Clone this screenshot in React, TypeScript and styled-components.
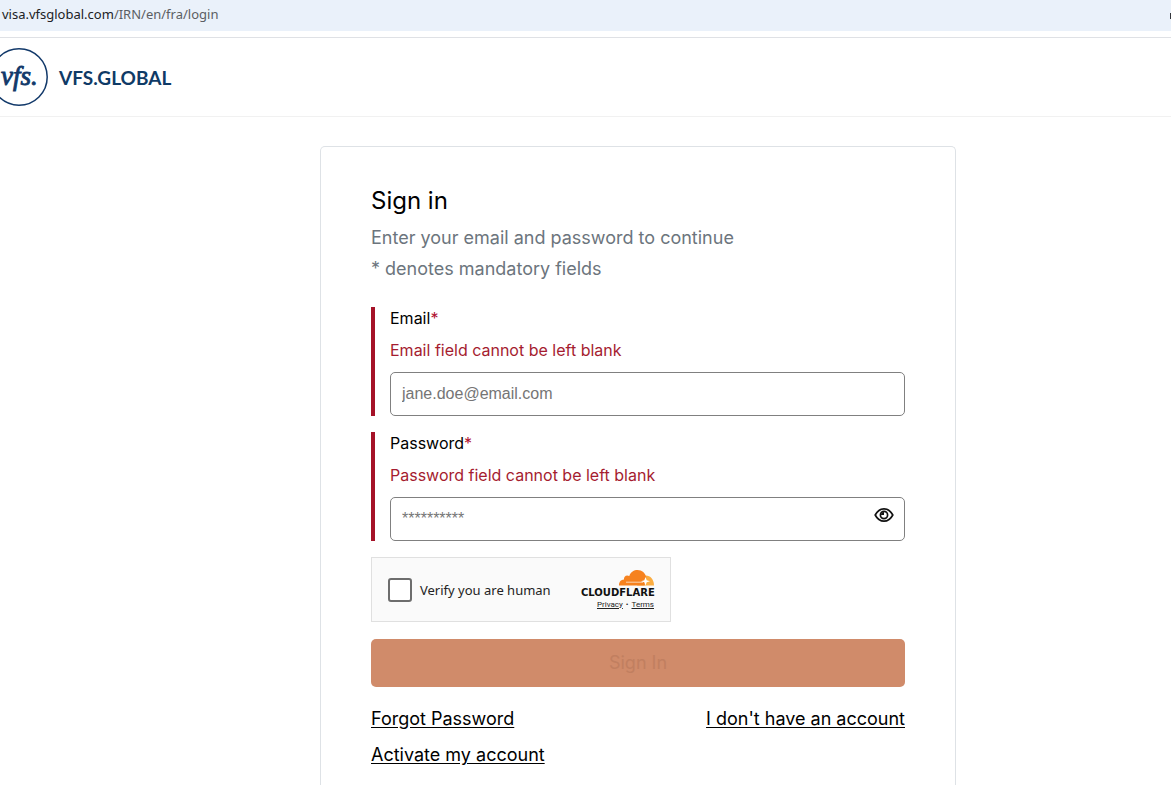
import React from "react";
import styled, { createGlobalStyle } from "styled-components";

const GlobalStyle = createGlobalStyle`
  *, *::before, *::after { box-sizing: border-box; }
  body {
    margin: 0;
    background: #fff;
    color: #000;
    font-family: Inter, "Liberation Sans", sans-serif;
    font-size: 16px;
  }
`;

const Page = styled.div`
  min-height: 100vh;
  display: flex;
  flex-direction: column;
`;

const AddressBar = styled.div`
  display: flex;
  align-items: center;
  justify-content: space-between;
  height: 31px;
  padding-left: 2px;
  background: #eaf1fa;
  color: #5b5e63;
  font: 13px/28px "Noto Sans", "Open Sans", sans-serif;
`;

const Address = styled.div`
  height: 31px;
`;

const Host = styled.span`
  color: #202225;
`;

const BarControl = styled.span`
  width: 1px;
  height: 6px;
  background: #33363b;
`;

const Header = styled.header`
  display: flex;
  align-items: center;
  gap: 11px;
  height: 80px;
  margin-top: 6px;
  border-top: 1px solid #dfe1e5;
  border-bottom: 1px solid #f1f1f1;
`;

const Brand = styled.span`
  padding-top: 2px;
  color: #0f3a66;
  font: 700 19px/24px Lato, "Liberation Sans", sans-serif;
`;

const Main = styled.main`
  flex: 1;
  display: flex;
  justify-content: center;
  padding: 29px 0 0 105px;
`;

const Card = styled.form`
  width: 100%;
  max-width: 636px;
  padding: 38px 50px 16px;
  border: 1px solid #dee2e6;
  border-bottom: 0;
  border-radius: 5px 5px 0 0;
`;

const Title = styled.h1`
  margin: 0 0 5px;
  font-size: 24px;
  line-height: 32px;
  font-weight: 400;
`;

const Lead = styled.p`
  margin: 0;
  color: #6c757d;
  font-size: 18px;
  line-height: 31px;
`;

const Fields = styled.div`
  display: flex;
  flex-direction: column;
  gap: 16px;
  margin: 23px 0 16px;
`;

const Field = styled.div`
  padding-left: 15px;
  border-left: 4px solid #a51228;
`;

const Label = styled.label`
  display: block;
  font-size: 16px;
  line-height: 22px;
`;

const Required = styled.span`
  color: #b01030;
`;

const ErrorText = styled.p`
  margin: 9px 0 10px;
  color: #a51c30;
  font-size: 16px;
  line-height: 24px;
`;

const InputBox = styled.div`
  display: flex;
  align-items: center;
  height: 44px;
  padding: 0 10px 0 11px;
  border: 1px solid #808080;
  border-radius: 5px;
`;

const Input = styled.input`
  flex: 1;
  min-width: 0;
  padding: 0;
  border: 0;
  outline: 0;
  background: none;
  font: 16px/24px "Liberation Sans", sans-serif;
  &::placeholder { color: #757575; opacity: 1; }
`;

const EyeButton = styled.button`
  display: flex;
  padding: 0 0 8px;
  border: 0;
  background: none;
`;

const Captcha = styled.div`
  display: flex;
  align-items: center;
  width: 300px;
  height: 65px;
  padding: 0 15px 0 16px;
  border: 1px solid #e0e0e0;
  background: #fafafa;
`;

const CaptchaLabel = styled.label`
  flex: 1;
  display: flex;
  align-items: center;
  gap: 8px;
  color: #232323;
  font: 13px/20px "Noto Sans", "Open Sans", sans-serif;
  white-space: nowrap;
`;

const Checkbox = styled.input`
  appearance: none;
  width: 24px;
  height: 24px;
  margin: 0;
  border: 2px solid #6d6d6d;
  border-radius: 3px;
  background: #fff;
`;

const Provider = styled.div`
  display: flex;
  flex-direction: column;
  align-items: flex-end;
`;

const Legal = styled.div`
  display: flex;
  gap: 3px;
  padding-right: 1px;
  color: #232323;
  font: 8px/12px Roboto, sans-serif;
  a { color: inherit; }
`;

const Submit = styled.button`
  display: block;
  width: 100%;
  height: 48px;
  margin: 17px 0 16px;
  padding: 0;
  border: 0;
  border-radius: 5px;
  background: #d08b6a;
  color: #c17f60;
  font: 18px/24px Inter, sans-serif;
`;

const Links = styled.nav`
  display: grid;
  grid-template-columns: auto auto;
  justify-content: space-between;
  row-gap: 4px;
`;

const TextLink = styled.a`
  color: #000;
  font-size: 18px;
  line-height: 32px;
  text-underline-offset: 2px;
`;

const VfsMark = () => (
  <svg width="48" height="58" viewBox="0 0 48 58" role="img" aria-label="VFS emblem">
    <circle cx="19" cy="29" r="28.2" fill="none" stroke="#12396a" strokeWidth="1.5" />
    <text x="1" y="37" fill="#12396a" stroke="#12396a" strokeWidth="0.9" fontFamily="Liberation Serif, serif" fontStyle="italic" fontSize="27">
      vfs.
    </text>
  </svg>
);

const EyeIcon = () => (
  <svg width="20" height="16" viewBox="0 0 20 16" fill="none" stroke="#111" aria-hidden="true">
    <path d="M1.2 8C3.2 4.2 6.2 1.8 10 1.8S16.8 4.2 18.8 8C16.8 11.8 13.8 14.2 10 14.2S3.2 11.8 1.2 8Z" strokeWidth="1.7" strokeLinejoin="round" />
    <circle cx="10" cy="8" r="3.6" strokeWidth="1.7" />
    <path d="M10 5V8H7A3 3 0 0 1 10 5Z" fill="#111" stroke="none" />
  </svg>
);

const CloudflareLogo = () => (
  <svg width="76" height="30" viewBox="0 0 76 30" role="img" aria-label="Cloudflare">
    <path d="M66 6.5C71 6 75 10 75 16.5H58Z" fill="#fbad41" />
    <path d="M40 16.5C40 12.5 42 10.8 45 10.5C44.5 7.3 47.5 5.3 50.3 7C51.8 2.8 55 1 58.5 1C63 1 66.5 4 67.3 8.5L65.5 16.5Z" fill="#f6821f" />
    <path d="M47 13.2H64" stroke="#fde0c4" strokeWidth="0.9" />
    <path d="M66.5 8L67.7 11.2L71 12.2L67.7 13.2L66.5 16.5L65.3 13.2L62 12.2L65.3 11.2Z" fill="#fff" />
    <text x="2" y="27" fill="#111" fontFamily="DejaVu Sans, sans-serif" fontWeight="700" fontSize="10">
      CLOUDFLARE
    </text>
  </svg>
);

interface FormFieldProps {
  id: string;
  label: string;
  type: string;
  placeholder: string;
  children?: React.ReactNode;
}

const FormField = ({ id, label, type, placeholder, children }: FormFieldProps) => (
  <Field>
    <Label htmlFor={id}>{label}<Required>*</Required></Label>
    <ErrorText id={`${id}-error`}>{label} field cannot be left blank</ErrorText>
    <InputBox>
      <Input id={id} type={type} placeholder={placeholder} aria-invalid="true" aria-describedby={`${id}-error`} />
      {children}
    </InputBox>
  </Field>
);

export default function App() {
  return (
    <Page>
      <GlobalStyle />
      <AddressBar>
        <Address><Host>visa.vfsglobal.com</Host>/IRN/en/fra/login</Address>
        <BarControl />
      </AddressBar>
      <Header>
        <VfsMark />
        <Brand>VFS.GLOBAL</Brand>
      </Header>
      <Main>
        <Card onSubmit={(e) => e.preventDefault()}>
          <Title>Sign in</Title>
          <Lead>Enter your email and password to continue</Lead>
          <Lead>* denotes mandatory fields</Lead>
          <Fields>
            <FormField id="email" label="Email" type="email" placeholder="jane.doe@email.com" />
            <FormField id="password" label="Password" type="password" placeholder="**********">
              <EyeButton type="button" aria-label="Show password"><EyeIcon /></EyeButton>
            </FormField>
          </Fields>
          <Captcha>
            <CaptchaLabel htmlFor="human"><Checkbox id="human" type="checkbox" />Verify you are human</CaptchaLabel>
            <Provider>
              <CloudflareLogo />
              <Legal><a href="#privacy">Privacy</a><span>•</span><a href="#terms">Terms</a></Legal>
            </Provider>
          </Captcha>
          <Submit type="submit" disabled>Sign In</Submit>
          <Links>
            <TextLink href="#forgot">Forgot Password</TextLink>
            <TextLink href="#register">I don't have an account</TextLink>
            <TextLink href="#activate">Activate my account</TextLink>
          </Links>
        </Card>
      </Main>
    </Page>
  );
}
